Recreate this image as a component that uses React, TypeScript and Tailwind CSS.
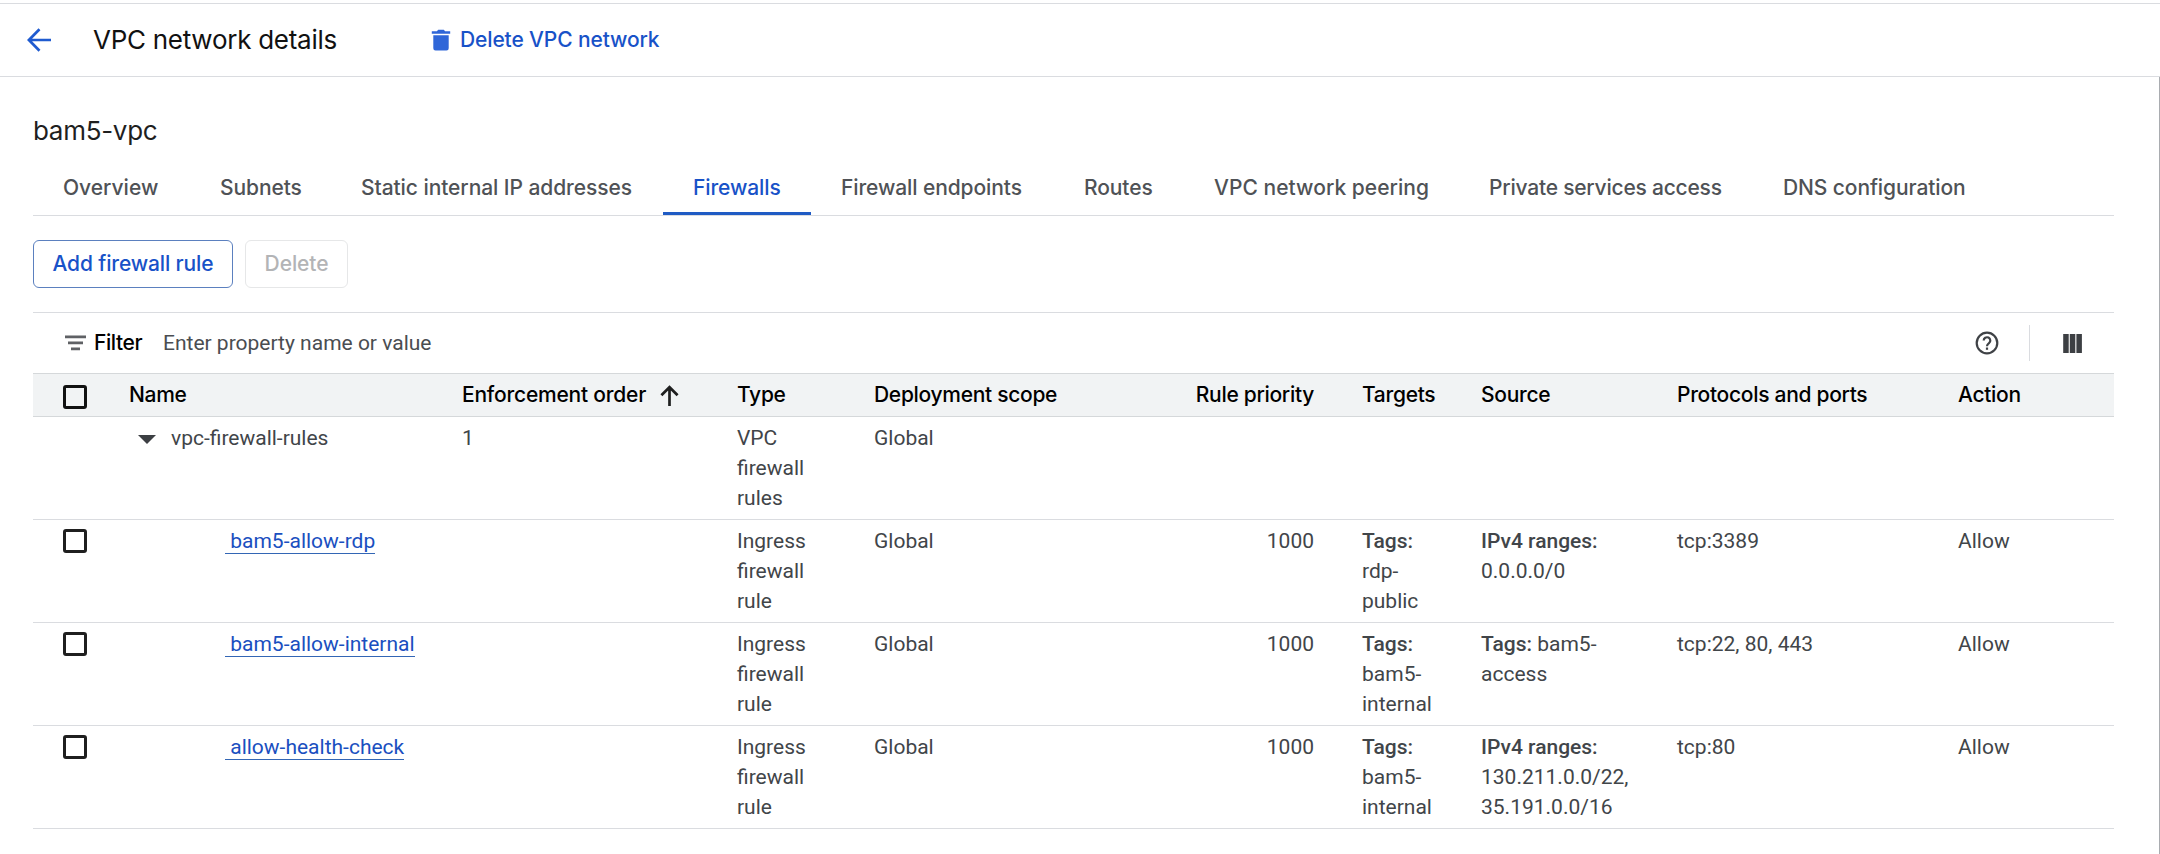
import type { ReactNode } from "react";

const tabs = [
  { label: "Overview", text: "w-[97px] tracking-[0px]" },
  { label: "Subnets", text: "w-[81px] tracking-[-0.1px]" },
  { label: "Static internal IP addresses", text: "w-[272px] tracking-[-0.07px]" },
  { label: "Firewalls", text: "w-[88px] tracking-[-0.1px]", active: true },
  { label: "Firewall endpoints", text: "w-[183px] tracking-[-0.1px]" },
  { label: "Routes", text: "w-[70px] tracking-[-0.1px]" },
  { label: "VPC network peering", text: "w-[215px] tracking-[0.04px]" },
  { label: "Private services access", text: "w-[234px] tracking-[-0.22px]" },
  { label: "DNS configuration", text: "w-[184px] tracking-[-0.1px]" },
];

type Rule = {
  name: string;
  targets: ReactNode[];
  source: ReactNode[];
  ports: string;
};

const rules: Rule[] = [
  {
    name: "bam5-allow-rdp",
    targets: [<b className="font-medium">Tags:</b>, "rdp-", "public"],
    source: [<b className="font-medium">IPv4 ranges:</b>, "0.0.0.0/0"],
    ports: "tcp:3389",
  },
  {
    name: "bam5-allow-internal",
    targets: [<b className="font-medium">Tags:</b>, "bam5-", "internal"],
    source: [
      <>
        <b className="font-medium">Tags:</b> bam5-
      </>,
      "access",
    ],
    ports: "tcp:22, 80, 443",
  },
  {
    name: "allow-health-check",
    targets: [<b className="font-medium">Tags:</b>, "bam5-", "internal"],
    source: [<b className="font-medium">IPv4 ranges:</b>, "130.211.0.0/22,", "35.191.0.0/16"],
    ports: "tcp:80",
  },
];

const columns =
  "grid grid-cols-[96px_333px_275px_137px_298px_190px_119px_196px_281px_1fr]";

function Lines({ items }: { items: ReactNode[] }) {
  return (
    <div>
      {items.map((item, i) => (
        <div key={i}>{item}</div>
      ))}
    </div>
  );
}

function Checkbox({ className }: { className: string }) {
  return (
    <span
      role="checkbox"
      aria-checked="false"
      className={`block size-6 rounded-[3px] border-3 ${className}`}
    />
  );
}

function Header() {
  return (
    <header className="flex h-[74px] items-center border-y border-[#dadce0]">
      <svg className="ml-[27px] size-6" viewBox="0 0 24 24" fill="none" stroke="#1f5bd0" strokeWidth="2.7">
        <path d="M24 12H2.5M12.5 1.2L1.9 12l10.600 10.8" />
      </svg>
      <h1 className="ml-[42px] w-[338px] font-['Inter',sans-serif] text-[26px] leading-9 tracking-[-0.27px] text-[#111]">
        VPC network details
      </h1>
      <button className="flex items-center font-['Inter',sans-serif] text-[21px] font-medium tracking-[-0.13px] text-[#1852c8]">
        <svg className="mr-[9px] h-[22px] w-5" viewBox="0 0 20 22" fill="#2f66d8">
          <path d="M.8 2.200h5.100L7.200.700h5.600l1.300 1.500h5.100v2.600H.8zM2.300 6.200h15.400v13a2.200 2.200 0 0 1-2.200 2.200h-11a2.200 2.200 0 0 1-2.200-2.200z" />
        </svg>
        Delete VPC network
      </button>
    </header>
  );
}

function TabBar() {
  return (
    <nav className="flex h-[56px] border-b border-[#dadce0] font-['Inter',sans-serif] text-[21px] font-medium">
      {tabs.map((t) => (
        <div
          key={t.label}
          className={
            t.active
              ? "flex h-[55px] flex-col justify-end border-b-3 border-[#1f5bc4] px-[30px] pb-[9px] text-[#1852c8]"
              : "flex h-[55px] flex-col justify-end px-[30px] pb-[12px] text-[#4f5256]"
          }
        >
          <span className={`whitespace-nowrap leading-[30px] ${t.text}`}>{t.label}</span>
        </div>
      ))}
    </nav>
  );
}

function FilterBar() {
  return (
    <div className="flex h-[61px] items-center border-t border-[#dadce0] text-[21px]">
      <svg className="ml-[32px] h-4 w-[21px]" viewBox="0 0 21 16" fill="#5f6165">
        <path d="M0 .500h21v2.700H0zM3 6.500h15v2.700H3zM6 12.500h9v2.700H6z" />
      </svg>
      <span className="ml-[8px] w-[69px] font-['Inter',sans-serif] font-medium tracking-[-0.4px] text-black">
        Filter
      </span>
      <span className="flex-1 pt-px text-[#4a4d51]">Enter property name or value</span>
      <svg className="size-6" viewBox="0 0 24 24" fill="none" stroke="#3f4246" strokeWidth="2.2">
        <circle cx="12" cy="12" r="10.300" />
        <path d="M8.700 9.600a3.300 3.300 0 1 1 5.300 2.600c-1.200.9-2 1.500-2 3" />
        <path d="M12 16.500v2.300" />
      </svg>
      <span className="ml-[30px] h-9 w-px bg-[#dadce0]" />
      <svg className="ml-[33px] mr-[32px] h-[19px] w-[19px]" viewBox="0 0 19 19" fill="#3c3f43">
        <path d="M.2 0h5.500v19H.2zM6.800 0h5.500v19H6.800zM13.400 0h5.500v19h-5.500z" />
      </svg>
    </div>
  );
}

function TableHead() {
  return (
    <div
      className={`${columns} h-[44px] items-center border-y border-[#d5d8da] bg-[#f1f3f4] font-['Inter',sans-serif] text-[21px] font-medium tracking-[-0.3px] text-black`}
    >
      <div className="pl-[30px] pt-[4px]">
        <Checkbox className="border-[#111]" />
      </div>
      <div>Name</div>
      <div className="flex items-center tracking-[-0.22px]">
        Enforcement order
        <svg className="ml-[14px] h-[21px] w-[19px]" viewBox="0 0 19 21" fill="none" stroke="#1f1f1f" strokeWidth="2.700">
          <path d="M9.500 21V2.500M1.400 10.300L9.500 2.200l8.100 8.100" />
        </svg>
      </div>
      <div>Type</div>
      <div>Deployment scope</div>
      <div className="pr-[48px] text-right">Rule priority</div>
      <div>Targets</div>
      <div>Source</div>
      <div>Protocols and ports</div>
      <div>Action</div>
    </div>
  );
}

export default function App() {
  return (
    <div className="h-[854px] w-[2160px] overflow-hidden bg-white pt-[3px] font-['Roboto',sans-serif] text-[#414549]">
      <Header />
      <main className="h-[777px] border-r border-[#a9acb0] pl-[33px] pr-[45px] pt-[33px]">
        <h2 className="h-[50px] font-['Inter',sans-serif] text-[26px] leading-[42px] tracking-[-0.3px] text-[#1f1f1f]">
          bam5-vpc
        </h2>
        <TabBar />
        <div className="flex gap-3 pb-6 pt-6 font-['Inter',sans-serif] text-[21px] font-medium">
          <button className="h-12 w-[200px] rounded-md border border-[#5b80bf] tracking-[-0.13px] text-[#1852c8]">
            Add firewall rule
          </button>
          <button className="h-12 w-[103px] rounded-md border border-[#e6e7e8] tracking-[-0.1px] text-[#b3b4b6]">
            Delete
          </button>
        </div>
        <FilterBar />
        <TableHead />
        <div className="text-[21px] leading-[30px]">
          <div className={`${columns} h-[103px] border-b border-[#dadce0] pt-[6px]`}>
            <div />
            <div className="flex items-start">
              <svg className="ml-[9px] mr-[15px] mt-[12px] h-[9px] w-[18px]" viewBox="0 0 18 9" fill="#3c3f43">
                <path d="M0 0h18L9 9z" />
              </svg>
              vpc-firewall-rules
            </div>
            <div>1</div>
            <Lines items={["VPC", "firewall", "rules"]} />
            <div>Global</div>
          </div>
          {rules.map((r) => (
            <div key={r.name} className={`${columns} h-[103px] border-b border-[#dadce0] pt-[6px]`}>
              <div className="pl-[30px] pt-[3px]">
                <Checkbox className="border-[#1f1f1f]" />
              </div>
              <div className="pl-[96px]">
                <a className="border-b border-[#3366b5] text-[#1a4fc0]">&nbsp;{r.name}</a>
              </div>
              <div />
              <Lines items={["Ingress", "firewall", "rule"]} />
              <div>Global</div>
              <div className="pr-[48px] text-right">1000</div>
              <Lines items={r.targets} />
              <Lines items={r.source} />
              <div>{r.ports}</div>
              <div>Allow</div>
            </div>
          ))}
        </div>
      </main>
    </div>
  );
}
